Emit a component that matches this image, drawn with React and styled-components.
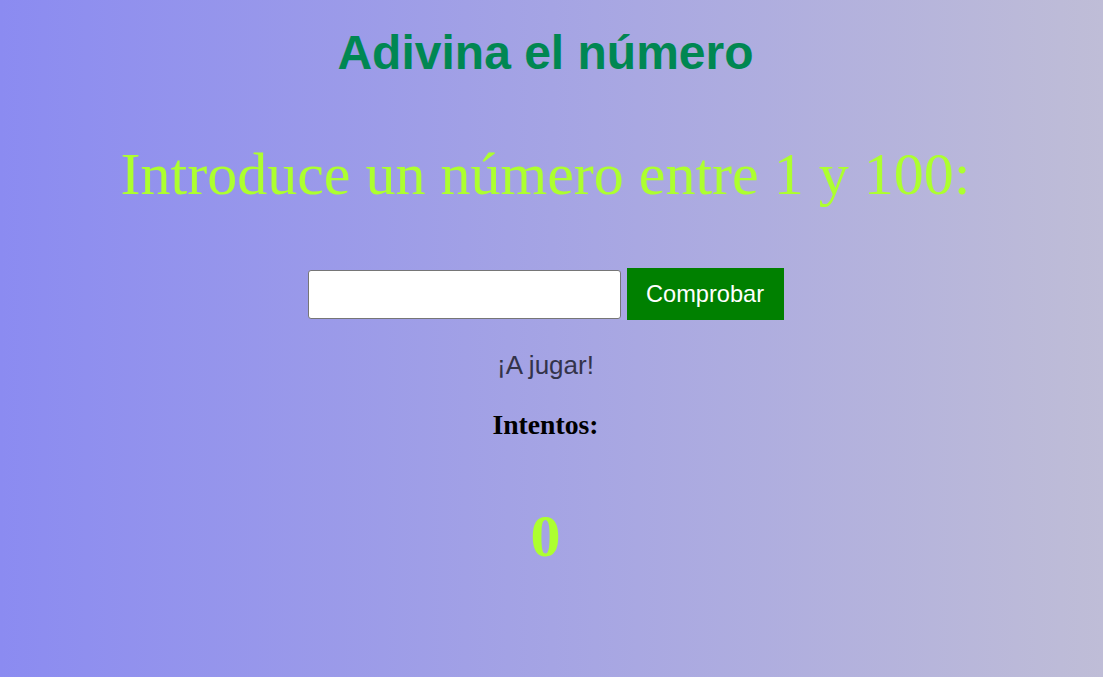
import React from 'react'
import styled, { createGlobalStyle } from 'styled-components'

const Global = createGlobalStyle`
    html, body {
        margin: 0;
        padding: 0;
    }
    body {
        min-height: 100vh;
        background: linear-gradient(to right, #8b8bf1, #bfbdd7);
    }
`

const Pantalla = styled.main`
    box-sizing: border-box;
    width: 100vw;
    min-height: 100vh;
    display: flex;
    flex-direction: column;
    align-items: center;
    padding: 25px 12px 0 0;
`

const Titulo = styled.h1`
    margin: 0;
    font-family: "Liberation Sans", Arial, sans-serif;
    font-size: 48px;
    font-weight: bold;
    line-height: 55px;
    color: #008752;
`

const Pregunta = styled.h2`
    margin: 60px 0 0;
    font-family: "Liberation Serif", "Times New Roman", serif;
    font-size: 60px;
    font-weight: normal;
    line-height: 69px;
    color: #adff2f;
`

const Fila = styled.form`
    margin-top: 59px;
    display: flex;
    align-items: center;
    gap: 6px;
`

const Campo = styled.input`
    box-sizing: border-box;
    width: 313px;
    height: 49px;
    border: 1px solid #767676;
    border-radius: 3px;
    background: white;
    font-size: 20px;
    padding: 0 8px;
`

const Boton = styled.button`
    box-sizing: border-box;
    width: 157px;
    height: 52px;
    border: 0;
    background-color: #008000;
    color: white;
    font-family: "Liberation Sans", Arial, sans-serif;
    font-size: 23.6px;
    cursor: pointer;
`

const Mensaje = styled.p`
    margin: 30px 0 0;
    font-family: "Liberation Sans", Arial, sans-serif;
    font-size: 26px;
    line-height: 30px;
    color: #33334a;
`

const Etiqueta = styled.h3`
    margin: 29px 0 0;
    font-family: "Liberation Serif", "Times New Roman", serif;
    font-size: 27.7px;
    font-weight: bold;
    line-height: 32px;
    color: black;
`

const Contador = styled.p`
    margin: 61px 0 0;
    font-family: "Liberation Serif", "Times New Roman", serif;
    font-size: 60px;
    font-weight: bold;
    line-height: 69px;
    color: #adff2f;
`

export default function App() {
    const [intentos] = React.useState(0)

    return (
        <>
            <Global />
            <Pantalla>
                <Titulo>Adivina el número</Titulo>
                <Pregunta>Introduce un número entre 1 y 100:</Pregunta>
                <Fila onSubmit={e => e.preventDefault()}>
                    <Campo type="text" />
                    <Boton type="submit">Comprobar</Boton>
                </Fila>
                <Mensaje>¡A jugar!</Mensaje>
                <Etiqueta>Intentos:</Etiqueta>
                <Contador>{intentos}</Contador>
            </Pantalla>
        </>
    )
}
